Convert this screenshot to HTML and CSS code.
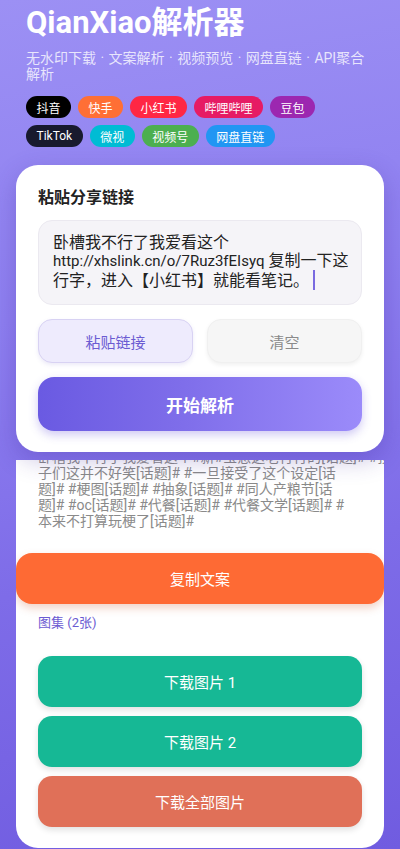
FILE: index.html
```html
<!DOCTYPE html>
<html lang="zh-CN">
<head>
<meta charset="utf-8">
<title>QianXiao解析器</title>
<link rel="stylesheet" href="styles.css">
</head>
<body>
<div class="page">
  <header class="header">
    <h1 class="title">QianXiao解析器</h1>
    <p class="subtitle">无水印下载 · 文案解析 · 视频预览 · 网盘直链 · API聚合解析</p>
    <div class="tags">
      <span class="tag tag-douyin">抖音</span>
      <span class="tag tag-kuaishou">快手</span>
      <span class="tag tag-xhs">小红书</span>
      <span class="tag tag-bili">哔哩哔哩</span>
      <span class="tag tag-doubao">豆包</span>
    </div>
    <div class="tags">
      <span class="tag tag-tiktok">TikTok</span>
      <span class="tag tag-weishi">微视</span>
      <span class="tag tag-channels">视频号</span>
      <span class="tag tag-pan">网盘直链</span>
    </div>
  </header>

  <section class="input-card">
    <h2 class="card-title">粘贴分享链接</h2>
    <div class="link-box">卧槽我不行了我爱看这个<br><span class="url">http://xhslink.cn/o/7Ruz3fEIsyq</span> 复制一下这<br>行字，进入【小红书】就能看笔记。<span class="caret"></span></div>
    <div class="btn-row">
      <button class="btn btn-paste">粘贴链接</button>
      <button class="btn btn-clear">清空</button>
    </div>
    <button class="btn btn-start">开始解析</button>
  </section>

  <div class="results">
    <section class="result-card">
      <p class="caption">卧槽我不行了我爱看这个#新#宝崽这老行行的[话题]# #孩<br>子们这并不好笑[话题]# #一旦接受了这个设定[话<br>题]# #梗图[话题]# #抽象[话题]# #同人产粮节[话<br>题]# #oc[话题]# #代餐[话题]# #代餐文学[话题]# #<br>本来不打算玩梗了[话题]#</p>
      <button class="btn btn-copy">复制文案</button>
      <p class="gallery-label">图集 (2张)</p>
      <div class="downloads">
        <button class="btn btn-dl">下载图片 1</button>
        <button class="btn btn-dl">下载图片 2</button>
        <button class="btn btn-dl-all">下载全部图片</button>
      </div>
    </section>
  </div>
</div>
</body>
</html>
```

FILE: styles.css
```css
* {
  box-sizing: border-box;
}

html, body {
  margin: 0;
  padding: 0;
  height: 849px;
  overflow: hidden;
}

body {
  font-family: Roboto, "Noto Sans", "Noto Sans CJK SC", sans-serif;
  background: linear-gradient(170deg, #9c90f4 0%, #8e7ff0 35%, #7e6ce8 65%, #705ce0 100%);
  color: #222;
}

.page {
  display: flex;
  flex-direction: column;
  height: 849px;
}

.header {
  padding: 5px 26px 0;
}

.title {
  margin: 0;
  font-size: 31px;
  line-height: 36px;
  font-weight: 700;
  color: #fff;
}

.subtitle {
  margin: 9px 0 0;
  padding-right: 6px;
  font-size: 14px;
  line-height: 16px;
  word-spacing: 1px;
  color: rgba(255, 255, 255, 0.78);
}

.tags {
  display: flex;
  gap: 7px;
  margin-top: 7px;
}

.subtitle + .tags {
  margin-top: 14px;
}

.tag {
  display: inline-flex;
  align-items: center;
  justify-content: center;
  height: 22px;
  padding: 0 10.5px;
  border-radius: 11px;
  font-size: 12px;
  color: #fff;
  white-space: nowrap;
}

.tag-douyin { background: #000000; }
.tag-kuaishou { background: #ff6f35; }
.tag-xhs { background: #ff2744; }
.tag-bili { background: #e61b64; }
.tag-doubao { background: #9c27b0; }
.tag-tiktok { background: #181a2e; }
.tag-weishi { background: #00bcd4; }
.tag-channels { background: #4caf50; }
.tag-pan { background: #2196f3; }

.input-card {
  position: relative;
  z-index: 2;
  margin: 18px 16px 0;
  background: #fff;
  border-radius: 22px;
  padding: 22px 22px 21px;
  box-shadow: 0 8px 24px rgba(60, 40, 150, 0.28);
}

.card-title {
  margin: 0;
  font-size: 16px;
  line-height: 22px;
  font-weight: 700;
  color: #222;
}

.link-box {
  margin-top: 11px;
  height: 85px;
  padding: 13px 14px;
  background: #f5f4f8;
  border: 1px solid #ebe9f0;
  border-radius: 14px;
  font-size: 16px;
  line-height: 18px;
  color: #222;
  white-space: nowrap;
}

.url {
  font-size: 15px;
}

.caret {
  display: inline-block;
  width: 2px;
  height: 20px;
  margin-left: 4px;
  background: #7a6ae0;
  vertical-align: -4px;
}

.btn {
  display: flex;
  align-items: center;
  justify-content: center;
  width: 100%;
  border: none;
  font-family: inherit;
  padding: 0;
  cursor: pointer;
}

.btn-row {
  display: flex;
  gap: 14px;
  margin-top: 14px;
}

.btn-paste,
.btn-clear {
  flex: 1;
  height: 44px;
  border-radius: 14px;
  font-size: 15px;
}

.btn-paste {
  background: #eeebfd;
  border: 1px solid #d8d2f3;
  color: #6b5bd2;
  box-shadow: 0 2px 4px rgba(100, 80, 200, 0.12);
}

.btn-clear {
  background: #f6f6f6;
  border: 1px solid #f0f0f0;
  color: #8a8a8a;
  box-shadow: 0 2px 4px rgba(0, 0, 0, 0.06);
}

.btn-start {
  margin-top: 14px;
  height: 54px;
  border-radius: 16px;
  background: linear-gradient(90deg, #6a5ae2 0%, #7f6eea 45%, #9b8bfa 100%);
  color: #fff;
  font-size: 17px;
  font-weight: 700;
  box-shadow: 0 4px 10px rgba(100, 80, 220, 0.3);
}

.results {
  flex: 1;
  margin: 8px 16px 0;
  overflow: hidden;
}

.result-card {
  background: #fff;
  border-radius: 0 0 22px 22px;
  padding: 0 0 21px;
}

.caption {
  margin: -11px 22px 0;
  font-size: 14px;
  line-height: 16px;
  color: #8a8a8a;
  white-space: nowrap;
}

.btn-copy {
  margin-top: 24px;
  height: 51px;
  border-radius: 16px;
  background: #fe6a34;
  color: #fff;
  font-size: 15px;
  box-shadow: 0 4px 8px rgba(200, 80, 30, 0.25);
}

.gallery-label {
  margin: 10px 22px 0;
  font-size: 13px;
  line-height: 18px;
  color: #6b5bd2;
}

.downloads {
  display: flex;
  flex-direction: column;
  gap: 9px;
  margin: 24px 22px 0;
}

.btn-dl,
.btn-dl-all {
  height: 51px;
  border-radius: 14px;
  color: #fff;
  font-size: 15px;
  box-shadow: 0 3px 6px rgba(0, 0, 0, 0.12);
}

.btn-dl {
  background: #16b895;
}

.btn-dl-all {
  background: #e07058;
}
```
